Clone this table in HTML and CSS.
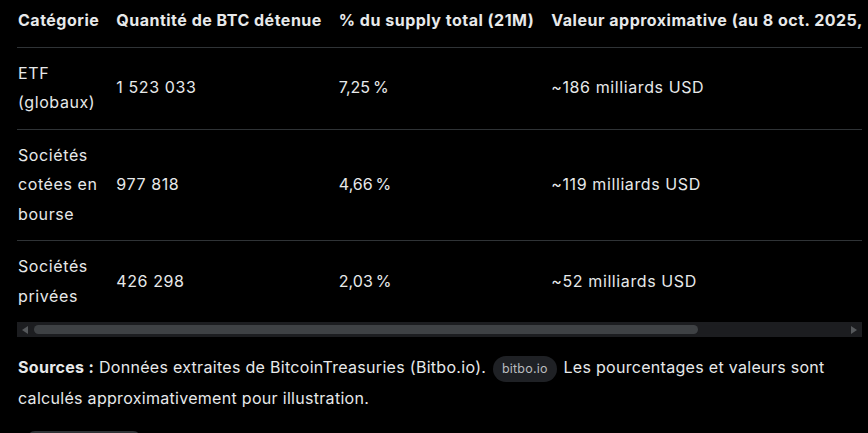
FILE: index.html
```html
<!DOCTYPE html>
<html lang="fr">
<head>
<meta charset="utf-8">
<title>BTC détenus</title>
<link rel="stylesheet" href="styles.css">
</head>
<body>
<main class="page">
  <div class="table-block">
    <div class="table-wrap">
      <table class="data">
        <thead>
          <tr>
            <th>Catégorie</th>
            <th>Quantité de BTC détenue</th>
            <th>% du supply total (21M)</th>
            <th>Valeur approximative (au 8 oct. 2025, ~122 000 USD/BTC)</th>
          </tr>
        </thead>
        <tbody>
          <tr>
            <td class="cat">ETF (globaux)</td>
            <td>1&nbsp;523&nbsp;033</td>
            <td>7,25&#8239;%</td>
            <td>~186 milliards USD</td>
          </tr>
          <tr>
            <td class="cat">Sociétés cotées en bourse</td>
            <td>977&nbsp;818</td>
            <td>4,66&#8239;%</td>
            <td>~119 milliards USD</td>
          </tr>
          <tr>
            <td class="cat">Sociétés privées</td>
            <td>426&nbsp;298</td>
            <td>2,03&#8239;%</td>
            <td>~52 milliards USD</td>
          </tr>
        </tbody>
      </table>
    </div>
    <div class="scrollbar">
      <span class="arrow arrow-left"></span>
      <div class="track"><div class="thumb"></div></div>
      <span class="arrow arrow-right"></span>
    </div>
  </div>
  <p class="note"><strong>Sources&nbsp;:</strong> Données extraites de BitcoinTreasuries (Bitbo.io). <span class="chip">bitbo.io</span> Les pourcentages et valeurs sont calculés approximativement pour illustration.</p>
  <div class="next-block"></div>
</main>
</body>
</html>
```
FILE: styles.css
```css
html, body {
  margin: 0;
  padding: 0;
  background: #000;
  overflow: hidden;
}
body {
  font-family: Inter, "Liberation Sans", sans-serif;
  font-size: 16px;
  letter-spacing: 0.6px;
  color: #e7e9ea;
}
.page {
  padding-left: 17px;
  width: 845px;
}
.table-wrap {
  overflow: hidden;
  width: 845px;
}
.data {
  border-collapse: collapse;
  line-height: 29.5px;
}
.data th {
  text-align: left;
  font-weight: 700;
  letter-spacing: 0.5px;
  white-space: nowrap;
  padding: 6px 16px 11px 1px;
  border-bottom: 1px solid #2f3336;
}
.data td {
  padding: 11px 16px 11px 1px;
  vertical-align: middle;
  white-space: nowrap;
  border-bottom: 1px solid #2f3336;
}
.data td.cat {
  white-space: normal;
}
.data tbody tr:last-child td {
  border-bottom: none;
}
.scrollbar {
  display: flex;
  align-items: center;
  height: 15px;
  background: #1c1d20;
  padding: 0 5px;
  gap: 6px;
}
.track {
  flex: 1;
  height: 9px;
}
.thumb {
  width: 664px;
  height: 9px;
  border-radius: 5px;
  background: #3e4144;
}
.arrow {
  width: 0;
  height: 0;
  border-top: 4px solid transparent;
  border-bottom: 4px solid transparent;
}
.arrow-left {
  border-right: 6px solid #55585b;
}
.arrow-right {
  border-left: 6px solid #55585b;
}
.note {
  margin: 15px 0 0 1px;
  line-height: 31px;
  letter-spacing: 0.3px;
  width: 830px;
}
.note strong {
  font-weight: 700;
}
.chip {
  display: inline-block;
  background: #1f2125;
  color: #b9bcbf;
  font-size: 12.5px;
  letter-spacing: 0.2px;
  line-height: 26px;
  height: 26px;
  padding: 0 9px;
  border-radius: 13px;
  vertical-align: middle;
  margin: 0 2px;
}
.next-block {
  margin: 17px 0 0 10px;
  width: 114px;
  height: 20px;
  border-radius: 8px;
  background: #2f3336;
}
```
